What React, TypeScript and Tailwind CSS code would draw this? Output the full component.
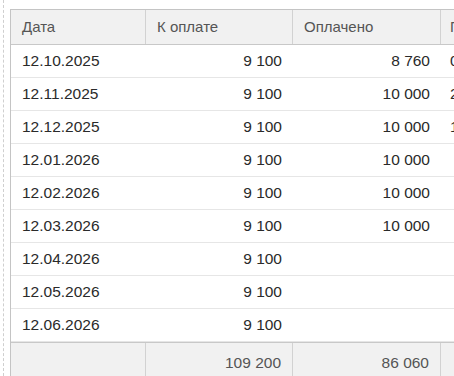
const rows = [
  ["12.10.2025", "9 100", "8 760", "08.10.2025"],
  ["12.11.2025", "9 100", "10 000", "20.11.2025"],
  ["12.12.2025", "9 100", "10 000", "11.12.2025"],
  ["12.01.2026", "9 100", "10 000", ""],
  ["12.02.2026", "9 100", "10 000", ""],
  ["12.03.2026", "9 100", "10 000", ""],
  ["12.04.2026", "9 100", "", ""],
  ["12.05.2026", "9 100", "", ""],
  ["12.06.2026", "9 100", "", ""],
]

export default function App() {
  return (
    <div className="flex h-[376px] w-[454px] overflow-hidden bg-white text-[15px] text-[#2a2a2a] [font-family:'Liberation_Sans',Arial,sans-serif]">
      <div className="ml-[3px] h-full border-l border-dashed border-[#cfcfcf]" />
      <div className="ml-[6px] mt-[9px] w-[600px] shrink-0 border-l border-t border-[#c4c4c4]">
        <div className="flex h-[35px] border-b border-[#c8c8c8] bg-[#f1f1f1] text-[#555]">
          <div className="flex w-[135px] items-center border-r border-[#d2d2d2] pl-[11px]">Дата</div>
          <div className="flex w-[147px] items-center border-r border-[#d2d2d2] pl-[11px]">К оплате</div>
          <div className="flex w-[148px] items-center border-r border-[#d2d2d2] pl-[11px]">Оплачено</div>
          <div className="flex w-[150px] items-center pl-[9px]">Платёж</div>
        </div>
        {rows.map((r) => (
          <div key={r[0]} className="flex h-[33px] border-b border-[#e6e6e6] text-[15.5px]">
            <div className="flex w-[135px] items-center pl-[11px]">{r[0]}</div>
            <div className="flex w-[147px] items-center justify-end pr-[11px]">{r[1]}</div>
            <div className="flex w-[148px] items-center justify-end pr-[11px]">{r[2]}</div>
            <div className="flex w-[150px] items-center pl-[9px]">{r[3]}</div>
          </div>
        ))}
        <div className="flex h-[40px] border-t border-[#c8c8c8] bg-[#f1f1f1] text-[15.5px] text-[#555]">
          <div className="w-[135px] border-r border-[#d2d2d2]" />
          <div className="flex w-[147px] items-center justify-end border-r border-[#d2d2d2] pr-[11px]">109 200</div>
          <div className="flex w-[148px] items-center justify-end border-r border-[#d2d2d2] pr-[11px]">86 060</div>
          <div className="w-[150px]" />
        </div>
      </div>
    </div>
  )
}
